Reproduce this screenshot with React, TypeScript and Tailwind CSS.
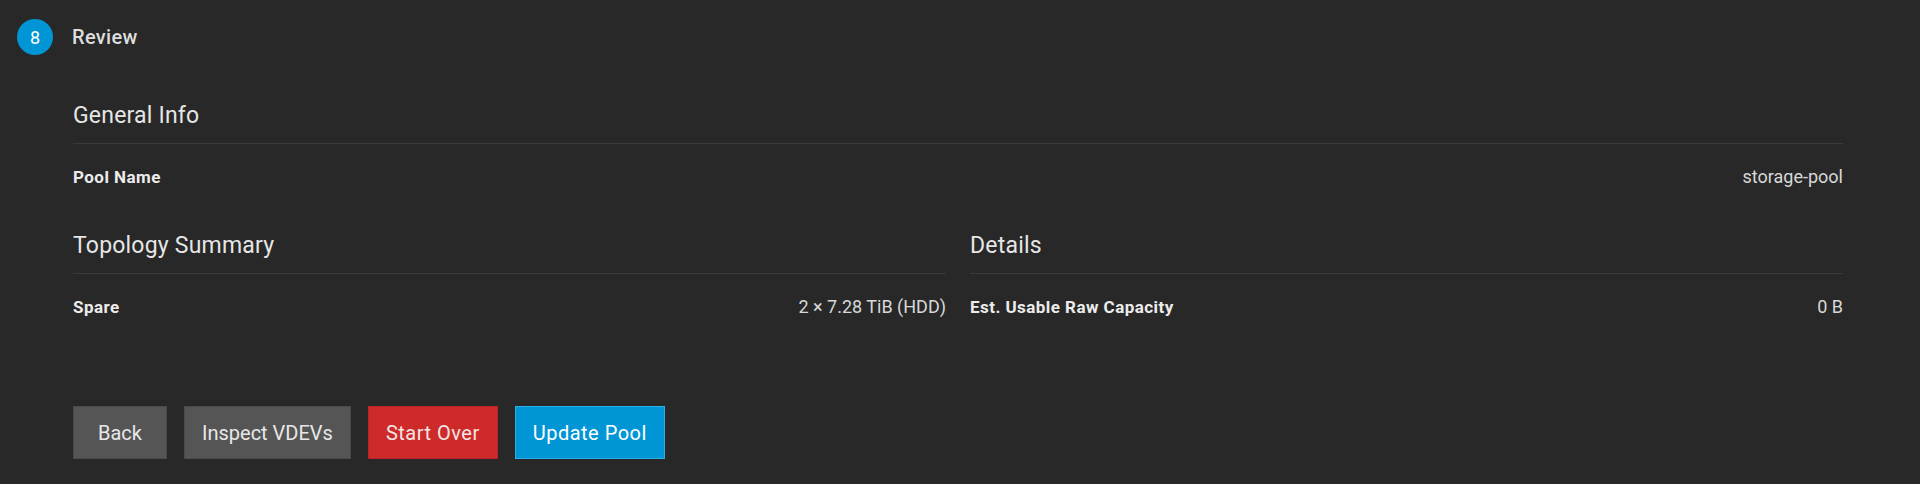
const font = "font-['Roboto','Liberation_Sans',sans-serif]";

function Section({ title }: { title: string }) {
  return (
    <div className="border-b border-[#3a3a3a] pb-[11px]">
      <h3 className="text-[23px] leading-[32px] text-[#e6e6e6] font-normal tracking-[0.2px]">{title}</h3>
    </div>
  );
}

function Row({ label, value }: { label: string; value: string }) {
  return (
    <div className="flex items-center justify-between h-[24px] leading-[24px]">
      <span className="text-[17px] font-bold tracking-[0.45px] text-[#ececec]">{label}</span>
      <span className="text-[18px] text-[#d8d8d8]">{value}</span>
    </div>
  );
}

export default function App() {
  return (
    <div className={`w-[1920px] h-[484px] bg-[#282828] ${font}`}>
      <div className="flex items-center gap-[19px] pt-[19px] pl-[17px]">
        <div className="w-[36px] h-[36px] rounded-full bg-[#0095d5] text-white flex items-center justify-center text-[18px]">
          8
        </div>
        <span className="text-[20px] font-medium tracking-[0.3px] text-[#dedede]">Review</span>
      </div>

      <div className="pl-[73px] pr-[77px]">
        <div className="mt-[45px]">
          <Section title="General Info" />
          <div className="mt-[21px]">
            <Row label="Pool Name" value="storage-pool" />
          </div>
        </div>

        <div className="grid grid-cols-2 gap-x-[24px] mt-[41px]">
          <div>
            <Section title="Topology Summary" />
            <div className="mt-[21px]">
              <Row label="Spare" value="2 × 7.28 TiB (HDD)" />
            </div>
          </div>
          <div>
            <Section title="Details" />
            <div className="mt-[21px]">
              <Row label="Est. Usable Raw Capacity" value="0 B" />
            </div>
          </div>
        </div>

        <div className="flex gap-[17px] mt-[87px] text-[20px]">
          <button className="h-[53px] min-w-[94px] px-[17px] bg-[#555555] border border-[#4a4a4a] text-[#e8e8e8]">
            Back
          </button>
          <button className="h-[53px] px-[17px] bg-[#555555] border border-[#4a4a4a] text-[#e8e8e8]">
            Inspect VDEVs
          </button>
          <button className="h-[53px] px-[17px] tracking-[0.5px] bg-[#cf2a2a] border border-[#b82323] text-[#f3e6e6]">
            Start Over
          </button>
          <button className="h-[53px] px-[17px] tracking-[0.5px] bg-[#0095d5] border border-[#2aaee6] text-white">
            Update Pool
          </button>
        </div>
      </div>
    </div>
  );
}
